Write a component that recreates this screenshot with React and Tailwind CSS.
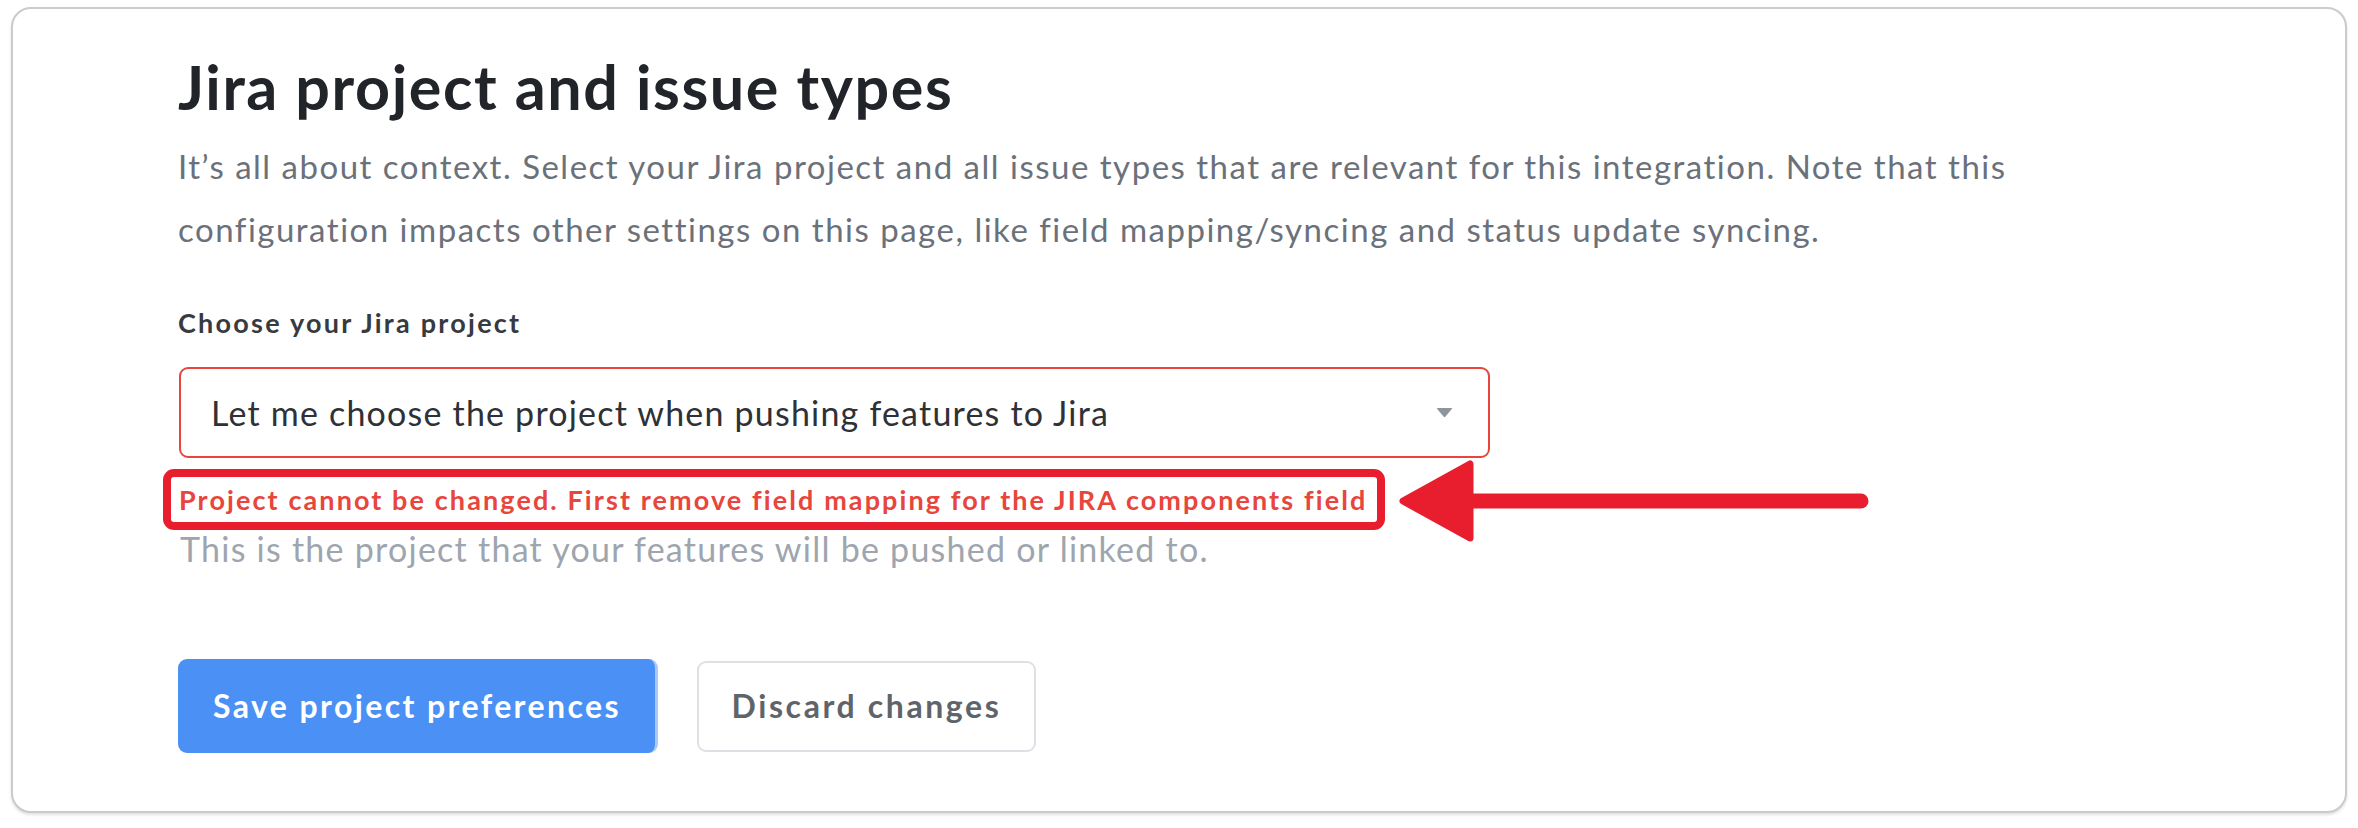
import React from "react";

export default function App() {
  const font = { fontFamily: "Lato, 'Open Sans', sans-serif" };
  return (
    <div className="relative w-[2358px] h-[828px] bg-white pt-[7px] pl-[11px]" style={font}>
      <div className="w-[2336px] h-[806px] rounded-[20px] border-2 border-[#cbcbcb] bg-white shadow-[0_2px_3px_rgba(0,0,0,0.12)] pl-[165px] pt-[42px]">
        <h1 className="text-[61px] leading-[72px] font-bold text-[#212429] tracking-[1.6px]">
          Jira project and issue types
        </h1>
        <p className="mt-[12px] w-[1900px] text-[33px] leading-[63px] text-[#6b717a] tracking-[1.5px]">
          It’s all about context. Select your Jira project and all issue types that are relevant for this integration. Note that this configuration impacts other settings on this page, like field mapping/syncing and status update syncing.
        </p>
        <div className="mt-[46px] text-[27px] leading-[32px] font-bold text-[#373a3f] tracking-[2.25px]">
          Choose your Jira project
        </div>
        <div className="mt-[28px] ml-[1px] w-[1311px] h-[91px] rounded-[9px] border-2 border-[#e8453c] flex items-center justify-between pl-[30px] pr-[35px]">
          <span className="text-[34px] text-[#2e3136] tracking-[1.2px]">Let me choose the project when pushing features to Jira</span>
          <svg width="17" height="11" viewBox="0 0 17 11">
            <path d="M1.5 1 L15.5 1 Q16.5 1 15.8 2 L9.5 9.6 Q8.5 10.6 7.5 9.6 L1.2 2 Q0.5 1 1.5 1 Z" fill="#8f959d" />
          </svg>
        </div>
        <div className="mt-[26px] ml-[1px] text-[27px] leading-[32px] font-bold text-[#e8453c] tracking-[2.1px]">
          Project cannot be changed. First remove field mapping for the JIRA components field
        </div>
        <div className="mt-[13px] ml-[2px] text-[34px] leading-[40px] text-[#9ea5ae] tracking-[1.25px]">
          This is the project that your features will be pushed or linked to.
        </div>
        <div className="mt-[90px] flex items-center gap-[39px]">
          <button className="h-[94px] w-[480px] rounded-[9px] bg-[#4a90f5] border-r-[3px] border-[#a9caf8] text-white text-[32px] font-bold text-left pl-[35px] tracking-[2.4px]">
            Save project preferences
          </button>
          <button className="h-[91px] w-[339px] rounded-[9px] border-2 border-[#dde1e6] bg-white text-[#5f646b] text-[32px] font-bold tracking-[2.6px]">
            Discard changes
          </button>
        </div>
      </div>

      <div className="absolute left-[163px] top-[469px] w-[1222px] h-[61px] rounded-[11px] border-[8px] border-[#e81e2e]"></div>

      <svg className="absolute left-[1390px] top-[452px]" width="490" height="100" viewBox="0 0 490 100">
        <polygon points="13,49 80,12 80,86" fill="#e81e2e" stroke="#e81e2e" strokeWidth="7" strokeLinejoin="round" />
        <line x1="80" y1="49" x2="471" y2="49" stroke="#e81e2e" strokeWidth="15" strokeLinecap="round" />
      </svg>
    </div>
  );
}
